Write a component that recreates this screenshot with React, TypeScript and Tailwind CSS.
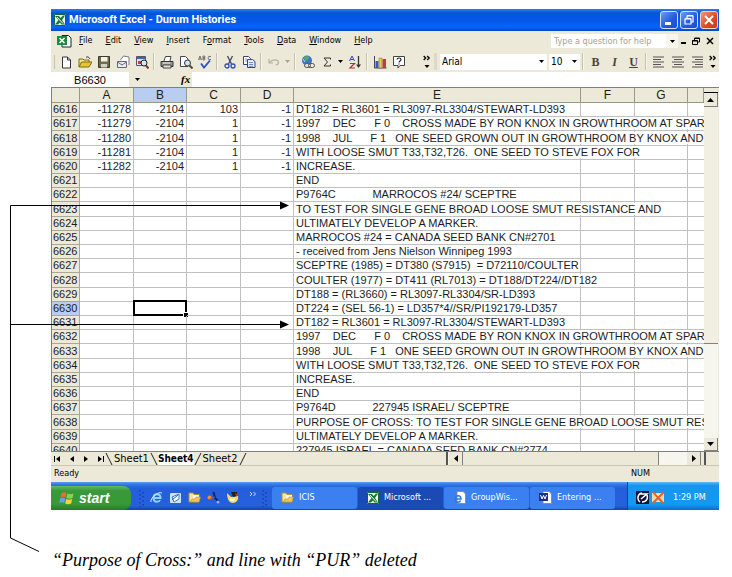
import type { ReactNode } from "react";

const UI = "font-['DejaVu_Sans_Condensed','DejaVu_Sans',sans-serif]";
const GRID = "font-['Liberation_Sans',Arial,sans-serif]";

type Row = { n: number; cells?: [string, string, string, string]; e: string };

const ROWS: Row[] = [
  { n: 6616, cells: ["-11278", "-2104", "103", "-1"], e: "DT182 = RL3601 = RL3097-RL3304/STEWART-LD393" },
  { n: 6617, cells: ["-11279", "-2104", "1", "-1"], e: "1997    DEC      F 0    CROSS MADE BY RON KNOX IN GROWTHROOM AT SPAR" },
  { n: 6618, cells: ["-11280", "-2104", "1", "-1"], e: "1998    JUL      F 1   ONE SEED GROWN OUT IN GROWTHROOM BY KNOX AND" },
  { n: 6619, cells: ["-11281", "-2104", "1", "-1"], e: "WITH LOOSE SMUT T33,T32,T26.  ONE SEED TO STEVE FOX FOR" },
  { n: 6620, cells: ["-11282", "-2104", "1", "-1"], e: "INCREASE." },
  { n: 6621, e: "END" },
  { n: 6622, e: "P9764C            MARROCOS #24/ SCEPTRE" },
  { n: 6623, e: "TO TEST FOR SINGLE GENE BROAD LOOSE SMUT RESISTANCE AND" },
  { n: 6624, e: "ULTIMATELY DEVELOP A MARKER." },
  { n: 6625, e: "MARROCOS #24 = CANADA SEED BANK CN#2701" },
  { n: 6626, e: "- received from Jens Nielson Winnipeg 1993" },
  { n: 6627, e: "SCEPTRE (1985) = DT380 (S7915)  = D72110/COULTER" },
  { n: 6628, e: "COULTER (1977) = DT411 (RL7013) = DT188/DT224//DT182" },
  { n: 6629, e: "DT188 = (RL3660) = RL3097-RL3304/SR-LD393" },
  { n: 6630, e: "DT224 = (SEL 56-1) = LD357*4//SR/PI192179-LD357" },
  { n: 6631, e: "DT182 = RL3601 = RL3097-RL3304/STEWART-LD393" },
  { n: 6632, e: "1997    DEC      F 0    CROSS MADE BY RON KNOX IN GROWTHROOM AT SPAR" },
  { n: 6633, e: "1998    JUL      F 1   ONE SEED GROWN OUT IN GROWTHROOM BY KNOX AND" },
  { n: 6634, e: "WITH LOOSE SMUT T33,T32,T26.  ONE SEED TO STEVE FOX FOR" },
  { n: 6635, e: "INCREASE." },
  { n: 6636, e: "END" },
  { n: 6637, e: "P9764D            227945 ISRAEL/ SCEPTRE" },
  { n: 6638, e: "PURPOSE OF CROSS: TO TEST FOR SINGLE GENE BROAD LOOSE SMUT RES" },
  { n: 6639, e: "ULTIMATELY DEVELOP A MARKER." },
  { n: 6640, e: "227945 ISRAEL = CANADA SEED BANK CN#2774" },
];

const Caret = () => (
  <svg viewBox="0 0 5 3" className="h-[3px] w-[5px] shrink-0"><path d="M0 0h5L2.5 3z" fill="#000" /></svg>
);

const ExcelLogo = ({ className }: { className: string }) => (
  <svg viewBox="0 0 12 12" className={className}>
    <rect width="12" height="12" fill="#e9f7e9" />
    <path d="M.5.5h11v11H.5z" fill="#eef8ee" stroke="#0d6b2d" />
    <path d="M1 2h4l1.500 2L9 1.500h2L8 6l3 4.500H7.500L6 8.500 4 10.500H1L4.500 6z" fill="#107a34" />
    <path d="M3 3l6 6.500" stroke="#fff" />
  </svg>
);

const Chevrons = ({ label }: { label: string }) => (
  <button aria-label={label} className="flex w-[9px] shrink-0 justify-center">
    <svg viewBox="0 0 8 14" className="h-[14px] w-2">
      <path d="M.7 1l2 2-2 2M4.200 1l2 2-2 2" fill="none" stroke="#000" strokeWidth="1.300" />
      <path d="M1.500 10h5L4 13z" />
    </svg>
  </button>
);

const Tool = ({ label, children }: { label: string; children: ReactNode }) => (
  <button aria-label={label} className="flex w-[19px] shrink-0 items-center justify-center">
    <svg viewBox="0 0 14 14" className="h-[14px] w-[14px]" fill="none">{children}</svg>
  </button>
);

const Sep = () => <span className="mx-[2px] h-[17px] w-[2px] shrink-0 border-l border-[#c5c2b0] bg-[#f7f5ec]" />;

const Page = ({ x = 0, y = 0 }: { x?: number; y?: number }) => (
  <path transform={`translate(${x} ${y})`} d="M.5.5h5l2.500 2.500v7.500H.5z" fill="#fff" stroke="#445" />
);

function TitleBar() {
  return (
    <header className="flex h-[22px] items-center bg-[linear-gradient(#2a7df0,#0455dc_18%,#0458ea_55%,#0666fa_82%,#0347c4)] pl-[3px] pr-px">
      <ExcelLogo className="h-3 w-3" />
      <h1 className="ml-[3px] flex-1 whitespace-nowrap font-['Roboto',sans-serif] text-[11px] font-bold text-white">
        Microsoft Excel - Durum Histories
      </h1>
      <div className="flex gap-[2px]">
        <button aria-label="Minimize" className="flex h-[18px] w-[18px] items-center justify-center rounded-[3px] border border-[#cfe0ff] bg-[linear-gradient(135deg,#6f9cf5,#2158dc_60%,#1c4fd0)]">
          <svg viewBox="0 0 14 14" className="h-[14px] w-[14px]"><path d="M3 9h6v3H3z" fill="#fff" /></svg>
        </button>
        <button aria-label="Restore" className="flex h-[18px] w-[18px] items-center justify-center rounded-[3px] border border-[#cfe0ff] bg-[linear-gradient(135deg,#6f9cf5,#2158dc_60%,#1c4fd0)]">
          <svg viewBox="0 0 14 14" className="h-[14px] w-[14px]"><path d="M5 5V3h6v6H9M3 6h6v5H3zM3 5.500h6M5 2.500h6" fill="none" stroke="#fff" strokeWidth="1.200" /></svg>
        </button>
        <button aria-label="Close" className="flex h-[18px] w-[18px] items-center justify-center rounded-[3px] border border-[#f3d5c8] bg-[linear-gradient(135deg,#f0957a,#dc4a20_60%,#c83d18)]">
          <svg viewBox="0 0 14 14" className="h-[14px] w-[14px]"><path d="M3 3l8 8M11 3l-8 8" stroke="#fff" strokeWidth="2" /></svg>
        </button>
      </div>
    </header>
  );
}

function MenuBar() {
  const items: [string, string, string][] = [
    ["", "F", "ile"], ["", "E", "dit"], ["", "V", "iew"], ["", "I", "nsert"], ["F", "o", "rmat"],
    ["", "T", "ools"], ["", "D", "ata"], ["", "W", "indow"], ["", "H", "elp"],
  ];
  return (
    <nav className={`flex h-5 items-center bg-[#ece9d8] pl-[6px] pr-1 text-[9px] ${UI}`}>
      <svg viewBox="0 0 15 14" className="h-[14px] w-[15px]">
        <path d="M5 1.500h6.500L14 4v9H5z" fill="#fff" stroke="#222" />
        <rect y="2" width="10" height="9" fill="#1c8a3e" />
        <path d="M2.500 4l5 5M7.500 4l-5 5" stroke="#fff" strokeWidth="1.500" />
      </svg>
      <ul className="ml-[7px] flex flex-1 gap-[13px]">
        {items.map(([a, b, c]) => (
          <li key={b + c}><button>{a}<u>{b}</u>{c}</button></li>
        ))}
      </ul>
      <input aria-label="Type a question for help" placeholder="Type a question for help" className="h-[14px] w-[115px] bg-white pl-[3px] placeholder:text-[#a5a294]" />
      <button aria-label="Question list" className="flex h-[14px] w-[12px] items-center justify-center bg-[#f7f5ec]"><Caret /></button>
      <button aria-label="Minimize workbook" className="px-[2px]">
        <svg viewBox="0 0 8 8" className="h-2 w-2"><path d="M1 5h5v2H1z" /></svg>
      </button>
      <button aria-label="Restore workbook" className="px-[2px]">
        <svg viewBox="0 0 8 8" className="h-2 w-2"><path d="M2.500 3V1h5v4H6M.5 3.500h5v4h-5zM2.500 1.500h5M.5 4h5" fill="none" stroke="#000" /></svg>
      </button>
      <button aria-label="Close workbook" className="pl-1 pr-px">
        <svg viewBox="0 0 8 8" className="h-2 w-2"><path d="M1 1l6 6M7 1L1 7" stroke="#000" strokeWidth="1.500" /></svg>
      </button>
    </nav>
  );
}

function ToolBar() {
  const lines = ["M1 2h11M1 4.500h8M1 7h11M1 9.500h8M1 12h11", "M1 2h12M3 4.500h8M1 7h12M3 9.500h8M1 12h12", "M2 2h11M5 4.500h8M2 7h11M5 9.500h8M2 12h11"];
  return (
    <div className={`flex h-[21px] items-center bg-[#ece9d8] pl-[3px] pr-[2px] text-[10px] ${UI}`}>
      <span className="mr-px h-[14px] w-px bg-[#c5c2b0]" />
      <Tool label="New"><path d="M3.500 2h5L11.500 5v8h-8z" fill="#fff" stroke="#334" /><path d="M8.500 2v3h3" stroke="#334" /></Tool>
      <Tool label="Open"><path d="M1 12V4h4l1 1h5v2" fill="#f7e58a" stroke="#7a6a10" /><path d="M1 12l2.500-5H14l-3 5z" fill="#e8c435" stroke="#7a6a10" /><path d="M8 2.500c2-1.500 3 0 4 1.500" stroke="#223" /></Tool>
      <Tool label="Save"><path d="M1.500 1.500h11v11h-11z" fill="#6e6d4a" stroke="#3c3b28" /><path d="M4 2h6.500v4.500H4z" fill="#f2f2ea" /><path d="M4 9h6v3.500H4z" fill="#cfcfc4" /></Tool>
      <Tool label="Mail"><path d="M4.500 5l3-4 5.500 1v8" fill="#fff" stroke="#778" /><path d="M1.500 6.500h9v6h-9z" fill="#e8ebf2" stroke="#667" /><path d="M1.500 7l4.500 3 4.500-3" stroke="#667" /></Tool>
      <Tool label="Research"><path d="M1.500 1.500h9v9h-9z" fill="#dfe6f2" stroke="#556" /><path d="M2 3h8" stroke="#3668b8" strokeWidth="2" /><path d="M3 6h3v3H3z" fill="#c04040" /><circle cx="9" cy="8" r="3" fill="#cfeaf2" stroke="#222" /><path d="M11 10.500l2.500 3" stroke="#8a3020" strokeWidth="2" /></Tool>
      <Sep />
      <Tool label="Print"><path d="M4 6l1.500-4.500H11L10 6" fill="#fff" stroke="#444" /><path d="M1 6.500h12v5H1z" fill="#9b9b96" stroke="#333" /><path d="M3 10h8v3H3z" fill="#e6e6de" stroke="#444" /><path d="M3 8h7" stroke="#eee" /></Tool>
      <Tool label="Print preview"><Page x={1} y={1} /><circle cx="8.500" cy="8" r="3" fill="#cfe6f2" stroke="#333" /><path d="M10.500 10.500l3 3" stroke="#5a4a20" strokeWidth="2" /></Tool>
      <Tool label="Spelling"><path d="M.5 5l1.500-4 1.500 4M1 4h2M5 1v4h1.500q1-1 0-2H5h1.500q1-1 0-2zM13 1.500q-3-1-3 1.500t3 1.500" stroke="#555" strokeWidth=".8" /><path d="M3 8.500l3 4 6-7" stroke="#2a4fc0" strokeWidth="1.800" /></Tool>
      <Sep />
      <Tool label="Cut"><path d="M4.500 1l4 8M9.500 1l-4 8" stroke="#446" strokeWidth="1.300" /><circle cx="4" cy="11" r="2" stroke="#3050b0" strokeWidth="1.300" /><circle cx="10" cy="11" r="2" stroke="#3050b0" strokeWidth="1.300" /></Tool>
      <Tool label="Copy"><path d="M1.500 1.500h5l2 2v6h-7z" fill="#fff" stroke="#35457f" /><path d="M5.500 4.500h5l2.500 2v6H5.500z" fill="#e4ebfa" stroke="#35457f" /><path d="M7 7.500h4M7 9.500h4M7 11.300h4M3 4h2M3 6h2" stroke="#5a70b8" strokeWidth=".8" /></Tool>
      <Sep />
      <Tool label="Undo"><path d="M2 4v4h4M2.500 7.500C5 4 11 4 11.500 7c0 2-1.500 3-3 3" stroke="#b5b2a4" strokeWidth="1.200" /></Tool>
      <button aria-label="Undo list" className="flex w-[9px] justify-center opacity-30"><Caret /></button>
      <Sep />
      <Tool label="Insert hyperlink"><circle cx="6" cy="5.500" r="5" fill="#3f74c8" /><path d="M3 2q3-2 5 0L7 5 4 6z" fill="#55ad5e" /><path d="M2 4l2 3" stroke="#bfe0d0" /><rect x="3.500" y="8.500" width="6" height="4" rx="2" fill="#ddd" stroke="#555" /><rect x="7.500" y="8.500" width="6" height="4" rx="2" stroke="#555" /></Tool>
      <Tool label="AutoSum"><path d="M10.500 4.500V3H4l3.500 4L4 11h6.500V9.500" stroke="#333" /></Tool>
      <button aria-label="AutoSum list" className="flex w-[9px] justify-center"><Caret /></button>
      <Tool label="Sort ascending"><path d="M1.500 6L4 1l2.500 5M2.500 4.500h3" stroke="#3048b8" /><path d="M2 8.500h4.500L2 13h5" stroke="#b03040" strokeWidth="1.200" /><path d="M10.500 1v10" stroke="#333" strokeWidth="1.300" /><path d="M8 9.500h5L10.500 13z" fill="#333" /></Tool>
      <Sep />
      <Tool label="Chart wizard"><path d="M1.500 1v12h12" stroke="#446" /><path d="M2.500 6h3v7h-3z" fill="#3358c8" /><path d="M6 3h3v10H6z" fill="#e8cc40" stroke="#86701a" strokeWidth=".5" /><path d="M9.500 4h3.500v9H9.500z" fill="#c8383c" /></Tool>
      <Tool label="Help"><path d="M1.500 1.500h11v9H8l-2 2.500v-2.500H1.500z" fill="#fff" stroke="#444" /><path d="M5 4.500c0-2 4-2 4 0C9 6 7 6 7 7.500M7 8.500v1" stroke="#222" strokeWidth="1.200" /></Tool>
      <span className="w-[14px] shrink-0" />
      <Chevrons label="More standard buttons" />
      <span className="ml-[3px] mr-[3px] h-[17px] w-[3px] shrink-0 bg-[#dcd9c8]" />
      <label className="relative flex min-w-0 flex-1 items-center">
        <select aria-label="Font" className="h-4 w-full appearance-none bg-white pl-[2px]"><option>Arial</option></select>
        <span className="pointer-events-none absolute right-[3px]"><Caret /></span>
      </label>
      <label className="relative ml-[2px] flex w-[31px] shrink-0 items-center">
        <select aria-label="Font size" className="h-4 w-full appearance-none bg-white pl-[2px]"><option>10</option></select>
        <span className="pointer-events-none absolute right-[3px]"><Caret /></span>
      </label>
      <Sep />
      <div className="flex font-['Liberation_Serif',serif] text-xs font-bold text-[#444]">
        <button className="w-[19px]">B</button>
        <button className="w-[19px] italic">I</button>
        <button className="w-[19px] underline">U</button>
      </div>
      <Sep />
      {lines.map((d, i) => (
        <Tool key={d} label={["Align left", "Center", "Align right"][i]}><path d={d} stroke="#555" strokeWidth="1.200" /></Tool>
      ))}
      <span className="w-[2px] shrink-0" />
      <Chevrons label="More formatting buttons" />
    </div>
  );
}

function FormulaBar() {
  return (
    <div className={`flex h-[15px] items-center bg-[#ece9d8] text-[11px] ${GRID}`}>
      <input aria-label="Name box" defaultValue="B6630" className="h-full w-[78px] bg-white text-center" />
      <button aria-label="Name list" className="flex h-full w-4 items-center justify-center"><Caret /></button>
      <span className="flex-none pl-9 pr-[2px] font-['Liberation_Serif',serif] text-[11px] font-bold italic leading-none">fx</span>
      <input aria-label="Formula" className="h-full flex-1 bg-white" />
    </div>
  );
}

const cell = "border-b border-r border-[#c0c0c0] p-0";

function Caret2({ up }: { up?: boolean }) {
  return <svg viewBox="0 0 7 4" className="h-1 w-[7px]"><path d={up ? "M0 4h7L3.500 0z" : "M0 0h7L3.500 4z"} /></svg>;
}

function Grid() {
  return (
    <div className="flex h-[364px] border-l border-t border-[#808080]">
      <div className="min-w-0 flex-1 overflow-hidden bg-white">
        <table className={`w-full table-fixed border-separate border-spacing-0 text-[11px] leading-[13px] text-[#1c1c1c] ${GRID}`}>
          <colgroup>
            <col className="w-[28px]" /><col className="w-[54px]" /><col className="w-[53px]" /><col className="w-[54px]" />
            <col className="w-[53px]" /><col /><col className="w-[54px]" /><col className="w-[53px]" /><col className="w-[16px]" />
          </colgroup>
          <thead>
            <tr className="h-[15px]">
              {["", "A", "B", "C", "D", "E", "F", "G", ""].map((h, i) => (
                <th key={i} scope="col" className={`border-b border-r border-[#9a9888] p-0 text-xs font-normal leading-[14px] ${h === "B" ? "bg-[#b9cdf0]" : "bg-[#ece9d8]"}`}>{h}</th>
              ))}
            </tr>
          </thead>
          <tbody>
            {ROWS.map((r, i) => (
              <tr key={r.n} className={i % 5 === 2 ? "h-[15px]" : "h-[14px]"}>
                <th scope="row" className={`border-b border-r border-[#a9a795] p-0 pl-px text-left font-normal ${r.n === 6630 ? "bg-[#b9cdf0]" : "bg-[#ece9d8]"}`}>{r.n}</th>
                {[0, 1, 2, 3].map((c) => (
                  <td key={c} className={`relative text-right ${cell} pr-[2px]`}>
                    {r.cells?.[c]}
                    {r.n === 6630 && c === 1 && (
                      <span className="absolute -inset-x-px -bottom-px -top-[2px] border-2 border-black">
                        <span className="absolute -bottom-[3px] -right-[3px] h-[5px] w-[5px] border-l border-t border-white bg-black" />
                      </span>
                    )}
                  </td>
                ))}
                <td className={`whitespace-pre pl-[2px] ${cell}`}><span className="bg-white">{r.e}</span></td>
                <td className={cell} /><td className={cell} /><td className="border-b border-[#c0c0c0] p-0" />
              </tr>
            ))}
          </tbody>
        </table>
      </div>
      <div className="flex w-[15px] flex-col bg-[#ece9d8] pr-px">
        <span className="mt-1 h-px bg-black" />
        <button aria-label="Scroll up" className="flex h-[14px] items-center justify-center border-b border-r border-[#808080]"><Caret2 up /></button>
        <div className="h-[237px] border-b border-[#808080] bg-[#f1efe2]" />
        <div className="flex-1 bg-[#f6f5ee]" />
        <button aria-label="Scroll down" className="flex h-[13px] items-center justify-center border-b border-r border-[#808080]"><Caret2 /></button>
      </div>
    </div>
  );
}

const Slash = ({ back }: { back?: boolean }) => (
  <svg viewBox="0 0 8 12" className="h-3 w-2 shrink-0"><path d={back ? "M1 0l6 12" : "M7 0L1 12"} stroke="#222" /></svg>
);

function SheetTabs() {
  const nav: [string, string][] = [
    ["First sheet", "M1 1v6h1V1zM7 1v6L3 4z"], ["Previous sheet", "M6 1v6L2 4z"],
    ["Next sheet", "M2 1v6l4-3z"], ["Last sheet", "M1 1v6l4-3zM6 1v6h1V1z"],
  ];
  return (
    <div className={`flex h-[14px] items-center border-t border-[#808080] bg-[#ece9d8] pl-[2px] text-[11px] leading-3 ${UI}`}>
      <div className="flex w-[52px] justify-between">
        {nav.map(([label, d]) => (
          <button key={label} aria-label={label}><svg viewBox="0 0 8 8" className="h-2 w-2"><path d={d} /></svg></button>
        ))}
      </div>
      <div className="flex flex-1 items-center">
        <Slash back />
        <button className="px-px">Sheet1</button>
        <Slash back />
        <button className="bg-white text-[10px] font-bold">Sheet4</button>
        <Slash />
        <button className="px-px">Sheet2</button>
        <Slash />
      </div>
      <div className="flex h-full w-[255px] items-stretch border-l-2 border-[#555] bg-[#f6f5ee] pl-px">
        <button aria-label="Scroll left" className="flex w-[14px] items-center justify-center border-r border-[#808080] bg-[#ece9d8]">
          <svg viewBox="0 0 4 7" className="h-[7px] w-1"><path d="M4 0v7L0 3.500z" /></svg>
        </button>
        <div className="w-[196px] border-r border-[#808080] bg-[#ece9d8]" />
        <div className="flex-1" />
        <button aria-label="Scroll right" className="flex w-[14px] items-center justify-center border-r border-[#808080] bg-[#ece9d8]">
          <svg viewBox="0 0 4 7" className="h-[7px] w-1"><path d="M0 0v7l4-3.500z" /></svg>
        </button>
      </div>
      <span className="ml-[3px] h-full w-[15px] border-l-2 border-[#555]" />
    </div>
  );
}

const Dots = () => (
  <svg viewBox="0 0 5 18" className="h-[18px] w-[5px] shrink-0"><path d="M1 1v17M4 3v15" stroke="#163fae" strokeDasharray="1.500 2.500" strokeWidth="1.500" /></svg>
);

const Folder = () => (
  <svg viewBox="0 0 13 13" className="h-[13px] w-[13px] shrink-0">
    <path d="M1 2h4l1 1.500h5V11H1z" fill="#f8e79a" stroke="#b98f28" /><path d="M5 4h6v6H5z" fill="#fff" /><path d="M2 11l2-3h3l1-2h4.500L11 11z" fill="#f0c94c" stroke="#b98f28" strokeWidth=".6" />
  </svg>
);

function TaskBar() {
  const task = "flex h-[22px] w-[85px] min-w-0 items-center gap-[5px] rounded-[3px] pl-[9px] whitespace-nowrap";
  return (
    <footer className={`flex h-[28px] items-center bg-[linear-gradient(#5d9af0,#2f74e4_10%,#245edb_22%,#2560dd_85%,#1941a5)] text-[9px] text-white ${UI}`}>
      <button className="mt-1 flex h-6 w-20 shrink-0 items-center gap-1 rounded-r-[8px] bg-[linear-gradient(#62b862,#3a983b_20%,#379a38_75%,#277a2a)] pl-2 font-['Liberation_Sans',sans-serif] text-sm font-bold italic">
        <svg viewBox="0 0 16 14" className="h-[14px] w-4">
          <path d="M2.500 2q3-1.500 5 0L6.500 6.500q-2-1.300-5 0z" fill="#ee6a35" /><path d="M8.500 2.500q3 1.500 6 0L13.500 7q-3 1.500-6 0z" fill="#8fd04a" />
          <path d="M1.200 7.500q3-1.300 5 0L5.200 12q-2-1.500-5 0z" fill="#6b9cf2" /><path d="M7.200 8q3 1.500 6 0L12.200 12.500q-3 1.500-6 0z" fill="#f8d040" />
        </svg>
        start
      </button>
      <div className="mt-[3px] flex min-w-0 flex-1 items-center pl-2">
        <Dots />
        <div className="ml-[6px] flex gap-[6px]">
          <button aria-label="Internet Explorer"><svg viewBox="0 0 13 13" className="h-[13px] w-[13px]"><path d="M3.500 7h7c0-5-7-5-7 0s5.500 4.500 6.500 2" fill="none" stroke="#8fd4ff" strokeWidth="2" /><path d="M1 11C0 7 8 0 12 2" fill="none" stroke="#d9f0ff" /></svg></button>
          <button aria-label="Show desktop"><svg viewBox="0 0 13 13" className="h-[13px] w-[13px]"><rect x="1" y="2" width="11" height="10" rx="1" fill="#cfe4fa" /><path d="M3 6l7-3v5l-5 3z" fill="#fff" stroke="#3b74c0" /><path d="M3 9l6-5" stroke="#2b64c0" /></svg></button>
          <button aria-label="Folders"><Folder /></button>
          <button aria-label="Messenger"><svg viewBox="0 0 13 13" className="h-[13px] w-[13px]"><path d="M6.500 1l1.500 6 4 4" fill="none" stroke="#16206e" strokeWidth="2" /><circle cx="2.500" cy="6.500" r="2" fill="#f08a30" /><path d="M3 8l5-2" stroke="#e04040" /><circle cx="11" cy="11" r="1.500" fill="#86b6f6" /></svg></button>
          <button aria-label="GroupWise"><svg viewBox="0 0 13 13" className="h-[13px] w-[13px]"><path d="M1 2l4 4 7-1c1 4-2 7-5 7S1 9 1 2z" fill="#f9dc58" /><path d="M5 1h6v4l-4 1z" fill="#2a1d1a" /><path d="M9 2l3 2-2 1z" fill="#d83a2a" /><path d="M4 8q3 2 5 0" fill="none" stroke="#fff" strokeWidth="2" /></svg></button>
        </div>
        <svg viewBox="0 0 8 6" className="mb-2 ml-[10px] h-[6px] w-2 shrink-0"><path d="M1 1l2 2-2 2M4.500 1l2 2-2 2" fill="none" stroke="#cfe0ff" /></svg>
        <span className="w-[5px] shrink-0" />
        <Dots />
        <div className="ml-[5px] flex min-w-0 gap-px">
          <button className={`${task} bg-[#3b80f0]`}><Folder />ICIS</button>
          <button className={`${task} bg-[#1c4ab4]`}><ExcelLogo className="h-3 w-3 shrink-0" />Microsoft ...</button>
          <button className={`${task} bg-[#3b80f0]`}>
            <svg viewBox="0 0 13 13" className="h-[13px] w-[13px] shrink-0"><path d="M4 .5h6l2.500 2.500v9.500H4z" fill="#fff" stroke="#88a" /><path d="M2 8h6c0-4.500-6-4.500-6 0s5 3.500 5.500 1.500" fill="none" stroke="#2c7bd8" strokeWidth="1.500" /></svg>
            GroupWis...
          </button>
          <button className={`${task} bg-[#3b80f0]`}>
            <svg viewBox="0 0 13 13" className="h-[13px] w-[13px] shrink-0"><path d="M4 .5h6l2.500 2.500v9.500H4z" fill="#fff" stroke="#88a" /><rect y="2" width="9" height="8" fill="#1c2f8f" /><path d="M1.500 4l1.500 4 1.500-3.500L6 8l1.500-4" fill="none" stroke="#fff" /></svg>
            Entering ...
          </button>
        </div>
      </div>
      <div className="flex h-full w-[92px] shrink-0 items-center border-l border-[#0f3fa8] bg-[linear-gradient(#5fbcf5,#1a94ec_12%,#119bf0_80%,#0c6ccc)] pl-2 pt-[3px]">
        <svg viewBox="0 0 13 13" className="h-[13px] w-[13px]"><rect width="13" height="13" fill="#10143c" /><path d="M6 2C1 3 1 9 4 11M4 3h7L5 8M6 11c5 0 6-4 5-7" fill="none" stroke="#fff" strokeWidth="1.500" /></svg>
        <svg viewBox="0 0 13 13" className="ml-[3px] h-[13px] w-[13px]"><rect y="2" width="12" height="9" fill="#f6d9a0" /><path d="M1 1l10 11M12 1L1 12" stroke="#e8602c" strokeWidth="2" /><path d="M4 3h4L6 5z" fill="#fff3b0" /></svg>
        <time className="ml-2 whitespace-nowrap">1:29 PM</time>
      </div>
    </footer>
  );
}

export default function App() {
  return (
    <main className="relative bg-white pb-1 pl-[51px] pr-[13px] pt-[9px] text-black">
      <section className="bg-[#ece9d8]">
        <TitleBar />
        <MenuBar />
        <ToolBar />
        <FormulaBar />
        <Grid />
        <SheetTabs />
        <div className={`flex h-[17px] items-center justify-between border-t border-[#c9c6b4] bg-[#ece9d8] pl-[3px] pr-[69px] text-[9px] ${UI}`}>
          <span>Ready</span>
          <span>NUM</span>
        </div>
        <TaskBar />
      </section>
      <p className="mt-[38px] pl-px font-['Liberation_Serif','Times_New_Roman',serif] text-lg italic leading-6">
        “Purpose of Cross:” and line with “PUR” deleted
      </p>
      <svg viewBox="0 0 300 577" className="pointer-events-none absolute left-0 top-0 h-[577px] w-[300px]" fill="none">
        <path d="M281 205.500H10.500V538L39 551.500M10.500 324.500H281" stroke="#000" />
        <path d="M280 201.500l9 4-9 4zM280 320.500l9 4-9 4z" fill="#000" />
      </svg>
    </main>
  );
}
